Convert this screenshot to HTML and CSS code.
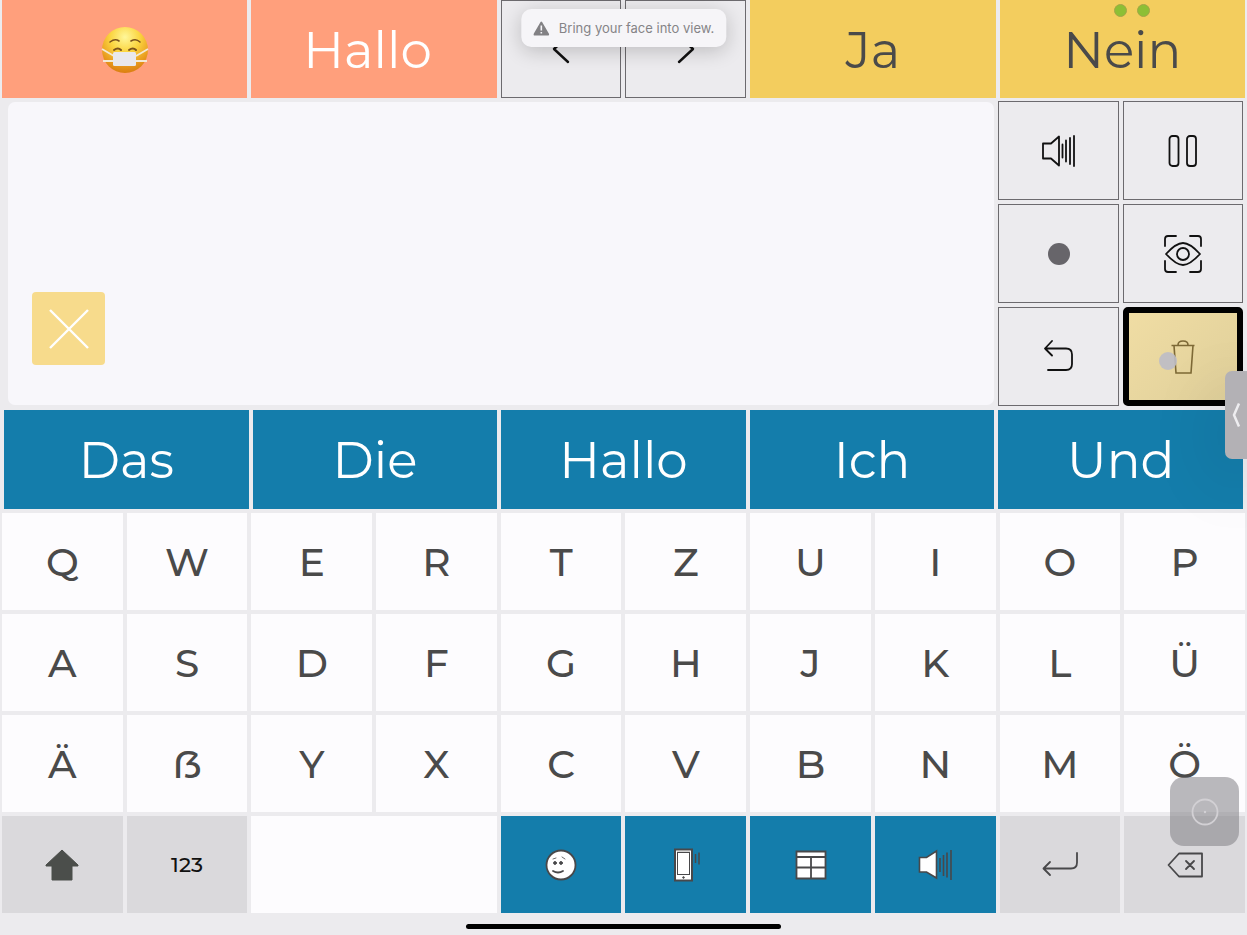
FILE: index.html
```html
<!DOCTYPE html>
<html lang="de">
<head>
    <meta charset="UTF-8">
    <meta name="viewport" content="width=device-width, initial-scale=1">
    <title>Tastatur</title>
    <link rel="stylesheet" href="styles.css">
</head>
<body>
    <div class="app">
        <div class="row top-row">
            <button class="tile wide orange" aria-label="Maske">
                <svg width="48" height="48" viewBox="0 0 48 48">
                    <defs>
                        <radialGradient id="face" cx="50%" cy="22%" r="80%">
                            <stop offset="0" stop-color="#fff79a"/>
                            <stop offset="0.4" stop-color="#fbd540"/>
                            <stop offset="0.75" stop-color="#e99c1f"/>
                            <stop offset="1" stop-color="#d97b10"/>
                        </radialGradient>
                    </defs>
                    <circle cx="24" cy="24" r="23" fill="url(#face)"/>
                    <g fill="none" stroke="#7b531c" stroke-width="1.6" stroke-linecap="round">
                        <path d="M9 16q5-4 9-1M30 15q5-3 9 1"/>
                        <path d="M13 24q4-3 7 0M28 24q4-3 7 0" stroke-width="2"/>
                    </g>
                    <path d="M1 23l12 7M47 23l-12 7M2 35h12M46 35h-12" stroke="#f3e9d6" stroke-width="1.8"/>
                    <rect x="12" y="26" width="23" height="14" rx="1.5" fill="#e9e8ec"/>
                </svg>
            </button>
            <button class="tile wide orange">Hallo&nbsp;</button>
            <button class="tile outline" aria-label="Zurück">
                <svg width="36" height="36" viewBox="0 0 36 36" class="icon bold"><path d="M25 4L11 17l14 13"/></svg>
            </button>
            <button class="tile outline" aria-label="Weiter">
                <svg width="36" height="36" viewBox="0 0 36 36" class="icon bold"><path d="M11 4l14 13-14 13"/></svg>
            </button>
            <button class="tile wide yellow">Ja</button>
            <button class="tile wide yellow">Nein</button>
        </div>

        <div class="row middle-row">
            <div class="speech">
                <textarea aria-label="Text"></textarea>
                <button class="clear" aria-label="Schließen">
                    <svg width="40" height="40" viewBox="0 0 40 40"><path d="M1 1l38 38M39 1L1 39" stroke="#fff" stroke-width="2.4"/></svg>
                </button>
            </div>
            <div class="actions">
                <button class="tile outline" aria-label="Sprechen">
                    <svg width="36" height="32" viewBox="0 0 36 32" class="icon">
                        <path d="M2 8.500h8l8-7v29l-8-7H2z"/>
                        <path d="M21.500 9.500v13M25 5.500v21M29 3v26M33 1v30"/>
                    </svg>
                </button>
                <button class="tile outline" aria-label="Pause">
                    <svg width="30" height="34" viewBox="0 0 30 34" class="icon">
                        <rect x="1.500" y="2" width="9" height="30" rx="3"/>
                        <rect x="19" y="2" width="9" height="30" rx="3"/>
                    </svg>
                </button>
                <button class="tile outline" aria-label="Aufnahme">
                    <svg width="22" height="22" viewBox="0 0 22 22"><circle cx="11" cy="11" r="11" fill="#67656a"/></svg>
                </button>
                <button class="tile outline" aria-label="Blick">
                    <svg width="38" height="38" viewBox="0 0 38 38" class="icon">
                        <path d="M1 11V4q0-3 3-3h8M26 1h8q3 0 3 3v7M37 26v8q0 3-3 3h-8M12 37H4q-3 0-3-3v-8"/>
                        <path d="M2 19Q12 8 19 8t17 11Q26 30 19 30T2 19z"/>
                        <circle cx="19" cy="19" r="6"/>
                    </svg>
                </button>
                <button class="tile outline" aria-label="Rückgängig">
                    <svg width="32" height="34" viewBox="0 0 32 34" class="icon">
                        <path d="M9 1L2 8.500l7 7M2 8.500h21q6 0 6 6V24q0 6-6 6H5"/>
                    </svg>
                </button>
                <button class="tile focused" aria-label="Löschen">
                    <svg width="26" height="36" viewBox="0 0 26 36" class="trash">
                        <path d="M1.500 6.500h23M8 6q0-4 5-4t5 4M4 6.500L6 34h15l2-27.500"/>
                    </svg>
                    <span class="gaze"></span>
                </button>
            </div>
        </div>

        <div class="row words-row">
            <button class="tile blue">Das</button>
            <button class="tile blue">Die</button>
            <button class="tile blue">Hallo</button>
            <button class="tile blue">Ich</button>
            <button class="tile blue">Und</button>
        </div>

        <div class="row keyboard">
            <button class="key">Q</button>
            <button class="key">W</button>
            <button class="key">E</button>
            <button class="key">R</button>
            <button class="key">T</button>
            <button class="key">Z</button>
            <button class="key">U</button>
            <button class="key">I</button>
            <button class="key">O</button>
            <button class="key">P</button>

            <button class="key">A</button>
            <button class="key">S</button>
            <button class="key">D</button>
            <button class="key">F</button>
            <button class="key">G</button>
            <button class="key">H</button>
            <button class="key">J</button>
            <button class="key">K</button>
            <button class="key">L</button>
            <button class="key">Ü</button>

            <button class="key">Ä</button>
            <button class="key">ẞ</button>
            <button class="key">Y</button>
            <button class="key">X</button>
            <button class="key">C</button>
            <button class="key">V</button>
            <button class="key">B</button>
            <button class="key">N</button>
            <button class="key">M</button>
            <button class="key">Ö</button>

            <button class="key gray" aria-label="Umschalt">
                <svg width="34" height="32" viewBox="0 0 34 32"><path d="M17 1L1 16v1h6v14h20V17h6v-1z" fill="#4b4e4b" stroke="#4b4e4b" stroke-linejoin="round"/></svg>
            </button>
            <button class="key gray small">123</button>
            <button class="key wide" aria-label="Leerzeichen"></button>
            <button class="key blue" aria-label="Emoji">
                <svg width="32" height="32" viewBox="0 0 32 32" stroke="#48484a" fill="none" stroke-linecap="round">
                    <circle cx="16" cy="16" r="14.500" fill="#fff" stroke-width="1.800"/>
                    <circle cx="10" cy="14" r="1.400" fill="#48484a"/>
                    <circle cx="16" cy="14" r="1.400" fill="#48484a"/>
                    <path d="M8 22q5 3 10 0" stroke-width="1.800"/>
                    <path d="M8 10l3-1M17 8l3 2" stroke-width="0.800"/>
                </svg>
            </button>
            <button class="key blue" aria-label="Telefon">
                <svg width="36" height="34" viewBox="0 0 36 34" stroke="#48484a" fill="none">
                    <rect x="7" y="1.500" width="17" height="31" fill="#fff" stroke-width="2"/>
                    <rect x="9.500" y="4.500" width="12" height="22"/>
                    <path d="M9 3h13" stroke="#aaa"/>
                    <circle cx="15.500" cy="29.500" r="0.800" fill="#48484a"/>
                    <path d="M27.500 6v9M31 4.500v12" stroke-width="1.500"/>
                </svg>
            </button>
            <button class="key blue" aria-label="Tabelle">
                <svg width="32" height="30" viewBox="0 0 32 30" stroke="#48484a" stroke-width="1.800" fill="#fff">
                    <path d="M1.500 1.500h29v27h-29zM1.500 7h29M1.500 17.500h29M16 7v21.500"/>
                </svg>
            </button>
            <button class="key blue" aria-label="Lautsprecher">
                <svg width="34" height="32" viewBox="0 0 34 32" stroke="#48484a" stroke-width="1.600" fill="#fff">
                    <path d="M1.500 8.500h7l10-6.500v27l-10-6H1.500z"/>
                    <path d="M22 9v14M25.500 6v21M29 3.500v25M33 1v30"/>
                </svg>
            </button>
            <button class="key gray" aria-label="Eingabe">
                <svg width="36" height="26" viewBox="0 0 36 26" class="icon dark"><path d="M8 10L1.500 16.500l6.500 6.500M2 16.500h27q6 0 6-6V1"/></svg>
            </button>
            <button class="key gray" aria-label="Rücktaste">
                <svg width="36" height="26" viewBox="0 0 36 26" class="icon dark"><path d="M1.500 13L12 1.500h23v23H12zM19 9l8 8M27 9l-8 8"/></svg>
            </button>
        </div>

        <div class="footer"><span class="home-bar"></span></div>
    </div>

    <!-- overlays -->
    <div class="toast" role="status">
        <svg width="16" height="15" viewBox="0 0 16 15">
            <path d="M8 1.500L15 13.500H1z" fill="#828184" stroke="#828184" stroke-width="1.800" stroke-linejoin="round"/>
            <path d="M8 4.500v5M8 11v1.500" stroke="#f6f5f8" stroke-width="1.600"/>
        </svg>
        <span>Bring your face into view.</span>
    </div>
    <div class="eye-status"><span></span><span></span></div>
    <button class="drawer" aria-label="Menü">
        <svg width="10" height="26" viewBox="0 0 10 26"><path d="M8 1.500L3 13l5 11.500" fill="none" stroke="#eeedf0" stroke-width="2.500"/></svg>
    </button>
    <button class="assist" aria-label="Hilfe">
        <svg width="28" height="28" viewBox="0 0 28 28"><circle cx="14" cy="14" r="12.500" fill="none" stroke="#d2d0d4" stroke-width="1.800"/><circle cx="14" cy="14" r="1.200" fill="#d2d0d4"/></svg>
    </button>
</body>
</html>
```
FILE: styles.css
```css
* {
    box-sizing: border-box;
}

body {
    margin: 0;
    background-color: #ecebee;
    font-family: Montserrat, Inter, "Liberation Sans", sans-serif;
    color: #4a4a4a;
    position: relative;
    overflow-x: hidden;
}

button {
    margin: 0;
    padding: 0;
    border: none;
    border-radius: 0;
    background: none;
    color: inherit;
    font-family: inherit;
    cursor: pointer;
    display: flex;
    align-items: center;
    justify-content: center;
}

.app {
    min-height: 100vh;
    display: grid;
    grid-template-rows: 98fr 308fr 103fr 404fr 22px;
}

.row {
    display: grid;
    gap: 4px;
}

.top-row {
    grid-template-columns: repeat(10, 1fr);
    padding: 0 2px;
}

.middle-row,
.words-row {
    grid-template-columns: repeat(5, 1fr);
    padding: 4px 4px 0;
}

.middle-row {
    padding-top: 3px;
}

.keyboard {
    grid-template-columns: repeat(10, 1fr);
    grid-template-rows: repeat(4, 1fr);
    padding: 4px 2px 0;
}

/* tiles */
.tile {
    font-size: 50px;
    font-weight: 400;
}

.top-row .tile,
.words-row .tile {
    padding-top: 2px;
}

.wide {
    grid-column: span 2;
}

.orange {
    background-color: #ff9f7c;
    color: white;
}

.yellow {
    background-color: #f3cd5e;
}

.blue {
    background-color: #147dab;
    color: white;
}

.outline {
    border: 1px solid #6c6a6e;
}

.icon {
    fill: none;
    stroke: #111;
    stroke-width: 1.8;
    stroke-linecap: round;
    stroke-linejoin: round;
}

.icon.bold {
    stroke-width: 2.4;
}

.icon.dark {
    stroke: #48484a;
}

/* text area */
.speech {
    grid-column: span 4;
    position: relative;
    margin: 1px 0 1px 4px;
}

.speech textarea {
    display: block;
    width: 100%;
    height: 100%;
    padding: 16px 24px;
    border: none;
    border-radius: 7px;
    background-color: #f8f7fb;
    font-family: inherit;
    font-size: 39px;
    resize: none;
    outline: none;
}

.clear {
    position: absolute;
    left: 24px;
    bottom: 40px;
    width: 73px;
    height: 73px;
    border-radius: 4px;
    background-color: #f7db8c;
}

.actions {
    display: grid;
    grid-template-columns: 1fr 1fr;
    grid-template-rows: repeat(3, 1fr);
    gap: 4px;
}

.focused {
    position: relative;
    border: 6px solid black;
    border-radius: 5px;
    background: linear-gradient(135deg, #f0dda4, #dfcf9a);
}

.trash {
    fill: none;
    stroke: #7d6936;
    stroke-width: 1.6;
}

.gaze {
    position: absolute;
    left: 30px;
    top: 39px;
    width: 18px;
    height: 18px;
    border-radius: 50%;
    background-color: rgba(188, 188, 198, 0.9);
}

/* keyboard */
.key {
    background-color: #fdfcfe;
    font-size: 39px;
    font-weight: 500;
}

.key.gray {
    background-color: #dad9dc;
}

.key.blue {
    background-color: #147dab;
}

.key.small {
    color: #111;
    font-size: 21px;
}

.footer {
    display: flex;
    justify-content: center;
    align-items: center;
    padding-top: 4px;
}

.home-bar {
    width: 315px;
    height: 5px;
    border-radius: 3px;
    background-color: black;
}

/* overlays */
.toast {
    position: absolute;
    top: 9px;
    left: 50%;
    transform: translateX(-50%);
    height: 38px;
    padding: 0 12px;
    display: flex;
    align-items: center;
    gap: 10px;
    border-radius: 10px;
    background-color: #f6f5f8;
    box-shadow: 0 4px 20px rgba(0, 0, 0, 0.2);
    color: #858487;
    font-family: Inter, sans-serif;
    font-size: 13px;
    font-weight: 400;
    white-space: nowrap;
}

.eye-status {
    position: absolute;
    top: 4px;
    right: 97px;
    display: flex;
    gap: 10px;
}

.eye-status span {
    width: 13px;
    height: 13px;
    border-radius: 50%;
    background-color: #8dbf35;
    border: 1px solid #a3a648;
}

.drawer {
    position: absolute;
    top: 371px;
    right: 0;
    width: 22px;
    height: 88px;
    border-radius: 7px 0 0 7px;
    background-color: #b3b1b5;
    box-shadow: 0 20px 70px rgba(0, 0, 0, 0.2);
}

.assist {
    position: absolute;
    right: 8px;
    bottom: 89px;
    width: 69px;
    height: 69px;
    border-radius: 14px;
    background-color: rgba(130, 128, 133, 0.55);
}
```
